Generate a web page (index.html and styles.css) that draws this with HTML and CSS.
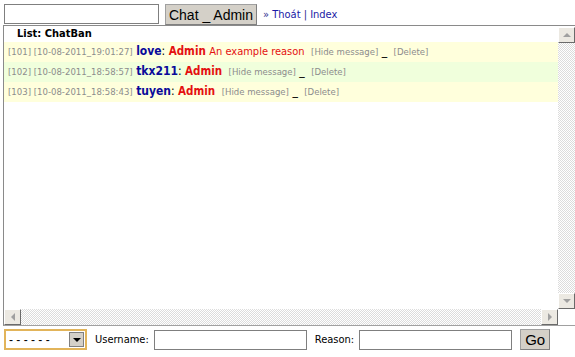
FILE: index.html
```html
<!DOCTYPE html>
<html>

<head>
    <title>ChatBan</title>
    <link rel="stylesheet" href="styles.css">
</head>

<body>
    <div class="topbar">
        <input type="text" class="chat-input">
        <button class="btn btn-chat">Chat _ Admin</button>
        <span class="links">&raquo; <a href="#">Thoát</a> | <a href="#">Index</a></span>
    </div>

    <div class="frame">
        <div class="frame-main">
            <div class="frame-body">
                <div class="list-title">List: ChatBan</div>
                <div class="row row-a">
                    <span class="meta">[101] [10-08-2011_19:01:27]</span>
                    <b class="user">love</b>: <b class="admin">Admin</b> <span class="reason">An example reason</span>
                    <span class="act">[Hide message]</span> _ <span class="act">[Delete]</span>
                </div>
                <div class="row row-b">
                    <span class="meta">[102] [10-08-2011_18:58:57]</span>
                    <b class="user">tkx211</b>: <b class="admin">Admin</b>
                    <span class="act">[Hide message]</span> _ <span class="act">[Delete]</span>
                </div>
                <div class="row row-a">
                    <span class="meta">[103] [10-08-2011_18:58:43]</span>
                    <b class="user">tuyen</b>: <b class="admin">Admin</b>
                    <span class="act">[Hide message]</span> _ <span class="act">[Delete]</span>
                </div>
            </div>
            <div class="vscroll">
                <div class="sb-btn"><span class="arr arr-up"></span></div>
                <div class="sb-track"></div>
                <div class="sb-btn"><span class="arr arr-down"></span></div>
            </div>
        </div>
        <div class="frame-foot">
            <div class="hscroll">
                <div class="sb-btn"><span class="arr arr-left"></span></div>
                <div class="sb-track"></div>
                <div class="sb-btn"><span class="arr arr-right"></span></div>
            </div>
            <div class="corner"></div>
        </div>
    </div>

    <div class="bottombar">
        <div class="select">
            <span class="select-text">- - - - - -</span>
            <span class="select-btn"><span class="arr arr-down dark"></span></span>
        </div>
        <label>Username:</label>
        <input type="text" class="field">
        <label>Reason:</label>
        <input type="text" class="field">
        <button class="btn btn-go">Go</button>
    </div>
</body>

</html>
```

FILE: styles.css
```css
body {
    margin: 0;
    padding: 4px 0 0 3px;
    font-family: "DejaVu Sans Condensed", "DejaVu Sans", sans-serif;
    font-size: 11px;
    background-color: #fff;
    width: 572px;
}

.topbar {
    display: flex;
    align-items: flex-start;
    height: 21px;
}

.chat-input {
    box-sizing: border-box;
    width: 155px;
    height: 20px;
    margin: 0 0 0 1px;
    border: 1px solid #7f7f7f;
    padding: 0;
}

.btn {
    box-sizing: border-box;
    background-color: #d4d0c8;
    border: 1px solid #a0a0a0;
    border-right-color: #808080;
    border-bottom-color: #808080;
    font-family: "Liberation Sans", Arial, sans-serif;
    color: #000;
    padding: 0;
    white-space: nowrap;
}

.btn-chat {
    width: 92px;
    height: 21px;
    margin-left: 6px;
    font-size: 14px;
}

.links {
    margin-left: 6px;
    margin-top: 4px;
    font-size: 11px;
    color: #2f2f8f;
}

.links a {
    color: #1a1aa6;
    text-decoration: none;
}

.frame {
    box-sizing: border-box;
    height: 301px;
    border-left: 1px solid #8a8a8a;
    border-top: 1px solid #8a8a8a;
    border-bottom: 1px solid #a0a0a0;
    display: flex;
    flex-direction: column;
    padding: 1px 0 0 0;
}

.frame-main {
    flex: 1;
    display: flex;
    min-height: 0;
}

.frame-body {
    flex: 1;
    padding-top: 1px;
}

.list-title {
    font-weight: bold;
    font-size: 11px;
    padding-left: 13px;
    height: 14px;
    line-height: 12px;
}

.row {
    height: 20px;
    line-height: 19px;
    padding-left: 4px;
    white-space: nowrap;
    font-size: 12px;
}

.row-a {
    background-color: #ffffdc;
}

.row-b {
    background-color: #f0ffdc;
}

.meta,
.act {
    color: #8c8c8c;
    font-size: 9.5px;
}

.act {
    margin-left: 3px;
}

.user {
    color: #0a0a9a;
    font-size: 12px;
}

.admin {
    color: #e41010;
    font-size: 11.5px;
}

.reason {
    color: #e41010;
    font-size: 11px;
}

.vscroll {
    width: 17px;
    display: flex;
    flex-direction: column;
}

.hscroll {
    flex: 1;
    display: flex;
    height: 16px;
}

.sb-track {
    flex: 1;
    background-color: #f6f6f6;
    background-image: repeating-conic-gradient(#dcdcdc 0 25%, #ffffff 0 50%);
    background-size: 2px 2px;
}

.sb-btn {
    box-sizing: border-box;
    width: 17px;
    height: 16px;
    background-color: #ece9e2;
    border: 1px solid #fff;
    border-right-color: #6a6a6a;
    border-bottom-color: #6a6a6a;
    display: flex;
    align-items: center;
    justify-content: center;
}

.arr {
    width: 0;
    height: 0;
    border: 4px solid transparent;
}

.arr-up {
    border-top-width: 0;
    border-bottom-color: #a0a0a0;
}

.arr-down {
    border-bottom-width: 0;
    border-top-color: #a0a0a0;
}

.arr-left {
    border-left-width: 0;
    border-right-color: #a0a0a0;
}

.arr-right {
    border-right-width: 0;
    border-left-color: #a0a0a0;
}

.arr-down.dark {
    border-top-color: #000;
}

.frame-foot {
    display: flex;
    height: 16px;
}

.corner {
    width: 17px;
    background-color: #fff;
}

.bottombar {
    display: flex;
    align-items: center;
    margin-top: 3px;
    height: 21px;
    font-size: 11px;
}

.select {
    box-sizing: border-box;
    width: 83px;
    height: 21px;
    margin-left: 1px;
    border: 2px solid #e2b45a;
    display: flex;
    align-items: center;
    background-color: #fff;
}

.select-text {
    flex: 1;
    padding-left: 3px;
    font-family: "Liberation Sans", Arial, sans-serif;
    font-size: 12px;
}

.select-btn {
    width: 15px;
    height: 15px;
    margin-right: 1px;
    background-color: #d4d0c8;
    border: 1px solid #808080;
    box-sizing: border-box;
    display: flex;
    align-items: center;
    justify-content: center;
}

.bottombar label {
    margin-left: 8px;
    margin-right: 5px;
}

.field {
    box-sizing: border-box;
    width: 153px;
    height: 20px;
    border: 1px solid #7f7f7f;
    padding: 0;
    margin: 0;
}

.btn-go {
    width: 30px;
    height: 21px;
    margin-left: 8px;
    font-size: 15px;
}
```
